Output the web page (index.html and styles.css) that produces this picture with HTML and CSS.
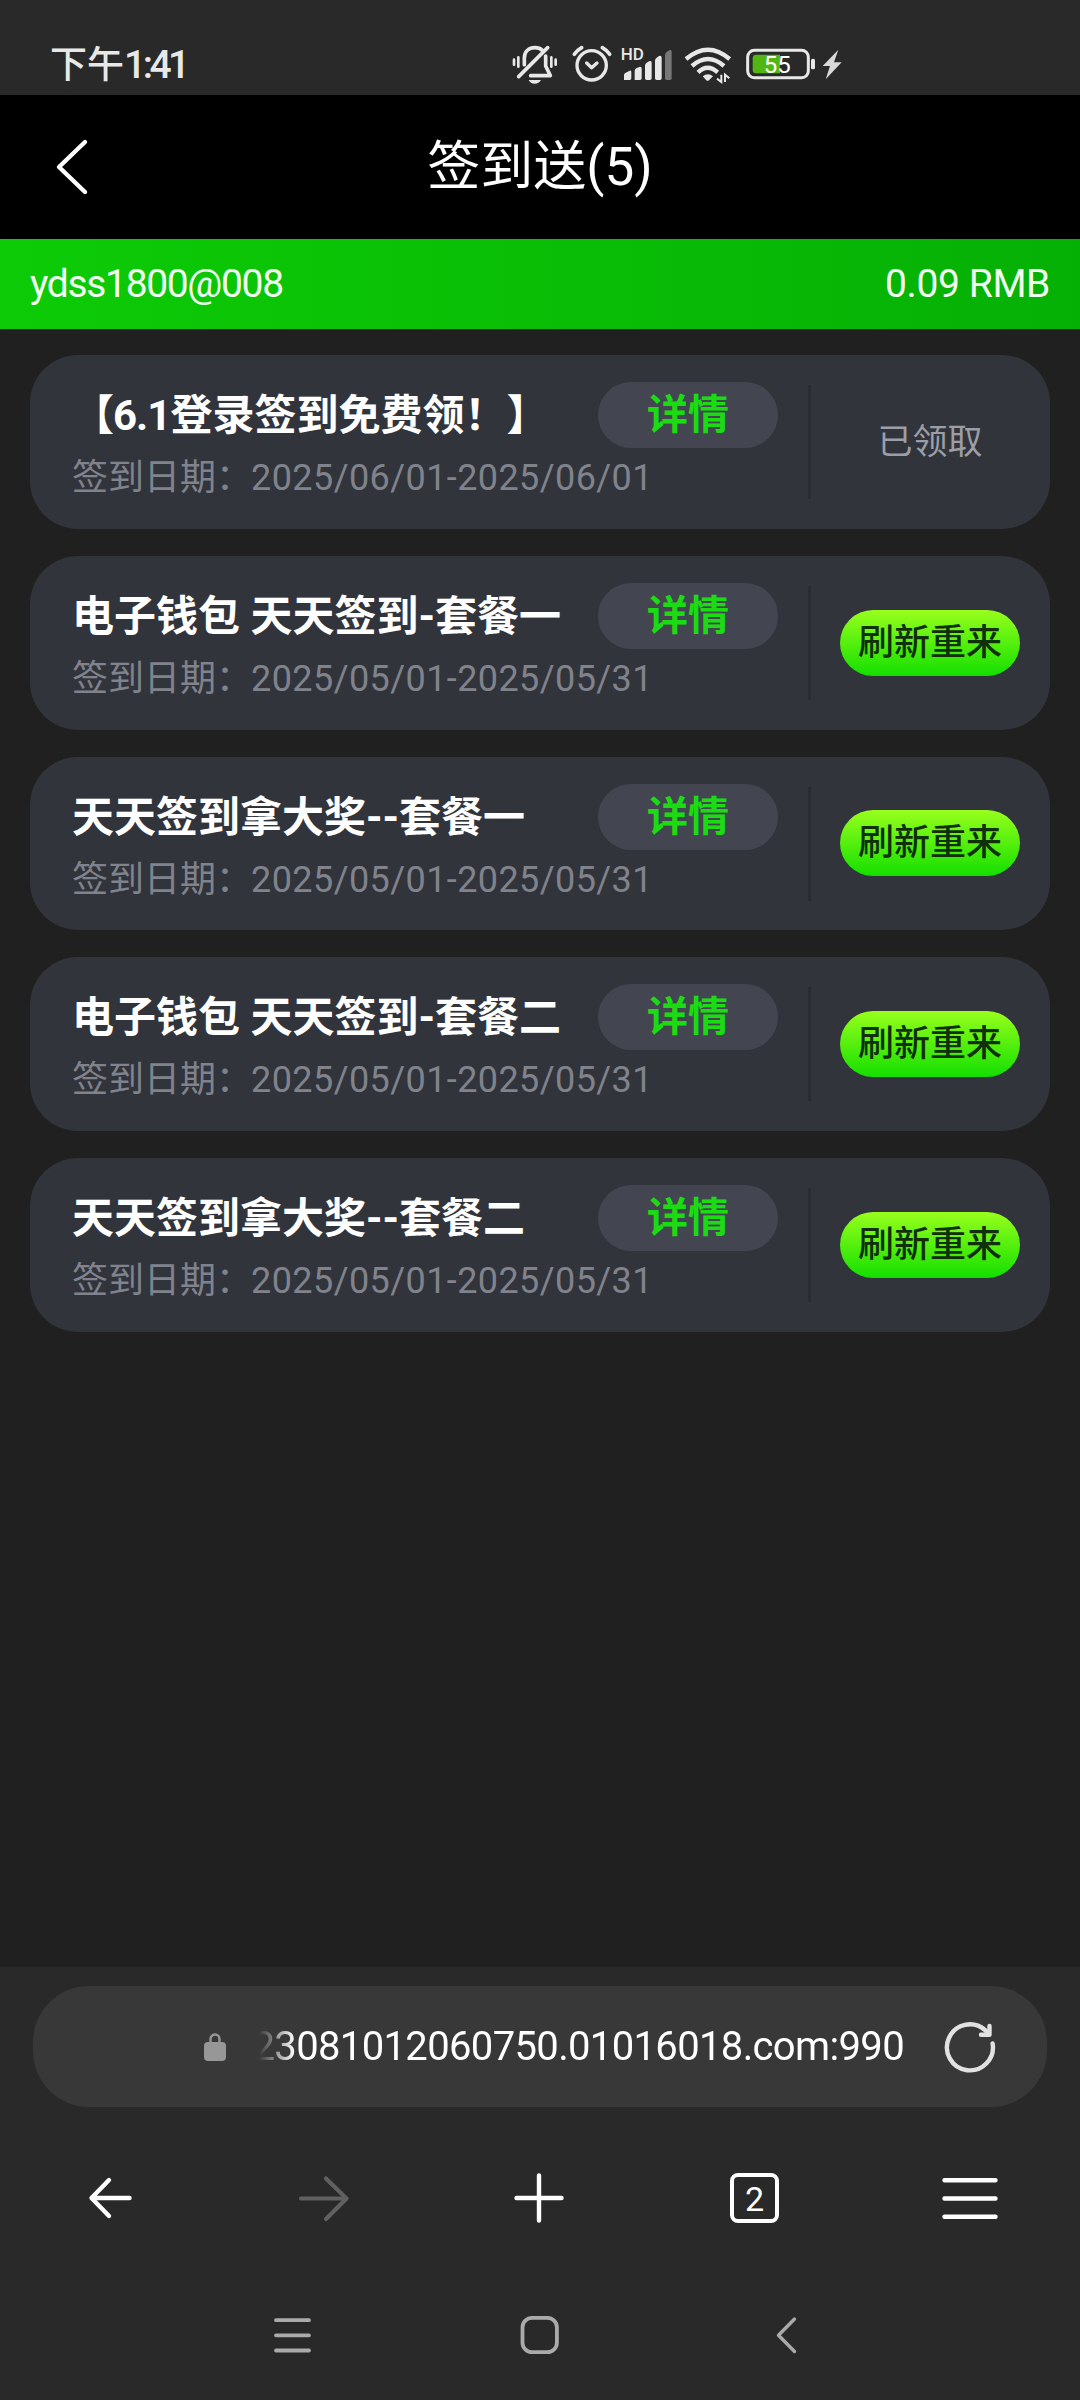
FILE: index.html
```html
<!DOCTYPE html>
<html lang="zh-CN">
<head>
<meta charset="utf-8">
<title>签到送(5)</title>
<link rel="stylesheet" href="styles.css">
</head>
<body>
<div class="screen">
  <div class="status">
    <div class="clock">下午<span class="clock-digits">1:41</span></div>
    <div class="status-icons">
      <svg width="46" height="40" viewBox="36 42 138 120" fill="none" stroke="#e8e8e8" stroke-width="11" stroke-linecap="round">
        <path d="M42 89v15M55 82v28M154 82v28M167 89v15" stroke-width="8"/>
        <path d="M73 104V84c0-20 14-31 32-31 9 0 17 3 22 8M137 78v30l14 29H92" stroke-linejoin="round"/>
        <path d="M56 140L143 53"/>
        <path d="M86 150h37q-6 11-19 11t-18-11z" fill="#e8e8e8" stroke="none"/>
      </svg>
      <svg class="icon-alarm" width="42" height="40" viewBox="212 42 126 120" fill="none" stroke="#e8e8e8" stroke-width="10" stroke-linecap="round">
        <circle cx="274" cy="106" r="44"/>
        <path d="M259 99l15 14 16-14" stroke-linejoin="round"/>
        <path d="M222 73q8-12 22-20M328 73q-8-12-22-20" stroke-width="11"/>
      </svg>
      <svg class="icon-signal" width="52" height="40" viewBox="364 42 156 120" fill="#e8e8e8">
        <text x="363" y="91" class="hd">HD</text>
        <path d="M373 150v-15q0-5 5-7l12-6q5-1 5 4v19q0 5-5 5zM405 150v-27q0-6 5-8l9-4q7-2 7 4v30q0 5-5 5zM436 145v-38q0-6 5-9l7-4q8-3 8 4v47q0 5-5 5h-10q-5 0-5-5zM466 145V92q0-6 5-9l7-5q8-3 8 5v62q0 5-5 5h-10q-5 0-5-5z"/>
        <path d="M496 145V76q0-6 5-10l7-5q8-4 8 5v79q0 5-5 5h-10q-5 0-5-5z" fill="#777"/>
      </svg>
      <svg class="icon-wifi" width="48" height="40" viewBox="552 42 144 120" fill="none" stroke="#e8e8e8" stroke-width="13">
        <path d="M558 87q66-56 131 0M576 108q48-42 96 0M594 127q29-27 59 0"/>
        <path d="M608 139q16-13 31 0l-12 12q-4 3-8 0z" fill="#e8e8e8" stroke="none"/>
        <path d="M664 134v22l-13-10M675 156v-22l13 11" stroke-width="6"/>
      </svg>
      <svg class="icon-battery" width="72" height="40" viewBox="734 42 216 120">
        <rect x="742" y="61" width="182" height="82" rx="20" fill="none" stroke="#e8e8e8" stroke-width="9"/>
        <path d="M767 74h72v56h-72q-10 0-10-10V84q0-10 10-10z" fill="#52b615"/>
        <rect x="932" y="86" width="12" height="32" rx="5" fill="#e8e8e8"/>
        <text x="831" y="128" class="battery-level">55</text>
      </svg>
      <svg class="icon-bolt" width="20" height="40" viewBox="965 42 60 120" fill="#d8d8d8">
        <path d="M1014 59l-47 49h22l-13 40 48-51h-23z"/>
      </svg>
    </div>
  </div>

  <header class="header">
    <svg class="header-back" width="38" height="62" viewBox="0 0 38 62" fill="none" stroke="#fff" stroke-width="4.4" stroke-linecap="round" stroke-linejoin="round"><path d="M32 6L6 31l26 25"/></svg>
    <h1 class="header-title">签到送(5)</h1>
  </header>

  <div class="account">
    <span class="account-name">ydss1800@008</span>
    <span class="balance">0.09 RMB</span>
  </div>

  <main class="list">
    <section class="card">
      <div class="info">
        <div class="row"><h2 class="name">【<span class="tight">6.1</span>登录签到免费领！】</h2><button class="detail">详情</button></div>
        <p class="date">签到日期：<span class="range">2025/06/01-2025/06/01</span></p>
      </div>
      <div class="action"><span class="claimed">已领取</span></div>
    </section>
    <section class="card">
      <div class="info">
        <div class="row"><h2 class="name">电子钱包 天天签到-套餐一</h2><button class="detail">详情</button></div>
        <p class="date">签到日期：<span class="range">2025/05/01-2025/05/31</span></p>
      </div>
      <div class="action"><button class="retry">刷新重来</button></div>
    </section>
    <section class="card">
      <div class="info">
        <div class="row"><h2 class="name">天天签到拿大奖--套餐一</h2><button class="detail">详情</button></div>
        <p class="date">签到日期：<span class="range">2025/05/01-2025/05/31</span></p>
      </div>
      <div class="action"><button class="retry">刷新重来</button></div>
    </section>
    <section class="card">
      <div class="info">
        <div class="row"><h2 class="name">电子钱包 天天签到-套餐二</h2><button class="detail">详情</button></div>
        <p class="date">签到日期：<span class="range">2025/05/01-2025/05/31</span></p>
      </div>
      <div class="action"><button class="retry">刷新重来</button></div>
    </section>
    <section class="card">
      <div class="info">
        <div class="row"><h2 class="name">天天签到拿大奖--套餐二</h2><button class="detail">详情</button></div>
        <p class="date">签到日期：<span class="range">2025/05/01-2025/05/31</span></p>
      </div>
      <div class="action"><button class="retry">刷新重来</button></div>
    </section>
  </main>

  <footer class="browser">
    <div class="address">
      <svg width="24" height="30" viewBox="0 0 24 30"><rect x="1" y="10" width="22" height="19" rx="4" fill="#979797"/><path d="M7.5 11V7a4.5 4.5 0 0 1 9 0v4" fill="none" stroke="#979797" stroke-width="2.4"/></svg>
      <div class="url"><span>23081012060750.01016018.com:990</span></div>
      <svg class="reload" width="54" height="54" viewBox="0 0 54 54" fill="none" stroke="#e2e2e2" stroke-width="4.4" stroke-linecap="round" stroke-linejoin="round"><path d="M49.6 23.500A23 23 0 1 1 42 10l3.500 3.500"/><path d="M46.500 6v8.800H38"/></svg>
    </div>
    <div class="toolbar">
      <svg width="60" height="60" viewBox="0 0 60 60" fill="none" stroke="#fff" stroke-width="4.400" stroke-linecap="round" stroke-linejoin="round"><path d="M49.500 30H12M29 12L11.500 30 29 48"/></svg>
      <svg width="60" height="60" viewBox="0 0 60 60" fill="none" stroke="#606060" stroke-width="4.200" stroke-linecap="round" stroke-linejoin="round"><path d="M6 30.500H51M31 10.500L51.500 30.500 31 51"/></svg>
      <svg width="60" height="60" viewBox="0 0 60 60" fill="none" stroke="#fff" stroke-width="4.400" stroke-linecap="round"><path d="M6.500 30h45M29 7.500v45"/></svg>
      <div class="tabs"><span>2</span></div>
      <svg width="60" height="60" viewBox="0 0 60 60" fill="none" stroke="#fff" stroke-width="4.400" stroke-linecap="round"><path d="M4.500 12.300h51M4.500 30.500h51M4.500 48.700h51"/></svg>
    </div>
    <div class="sysnav">
      <svg width="44" height="44" viewBox="0 0 44 44" fill="none" stroke="#aaa" stroke-width="3.800" stroke-linecap="round"><path d="M6 7.200h33M6 22.300h33M6 37.500h33"/></svg>
      <svg width="44" height="44" viewBox="0 0 44 44" fill="none" stroke="#aaa" stroke-width="3.800"><rect x="4.500" y="4.800" width="34.400" height="34.400" rx="9.500"/></svg>
      <svg width="44" height="44" viewBox="0 0 44 44" fill="none" stroke="#aaa" stroke-width="3.400" stroke-linecap="round" stroke-linejoin="round"><path d="M28.500 6L12.500 22.300 28.500 38.500"/></svg>
    </div>
  </footer>
</div>
</body>
</html>
```

FILE: styles.css
```css
* { box-sizing: border-box; margin: 0; padding: 0; }

body {
  background: #202020;
  color: #fff;
  font-family: Roboto, "Noto Sans CJK SC", sans-serif;
}

svg { display: block; flex: none; }

button { border: 0; font: inherit; }

.screen {
  display: flex;
  flex-direction: column;
  width: 1080px;
  height: 2400px;
  overflow: hidden;
}

/* System status bar */
.status {
  display: flex;
  flex: none;
  height: 95px;
  padding-left: 50px;
  background: #292929;
}

.clock {
  width: 462px;
  padding-top: 47px;
  color: #e8e8e8;
  font-size: 37px;
  font-weight: 500;
  line-height: 37px;
}

.clock-digits { font-size: 39px; letter-spacing: -3.5px; line-height: 37px; }

.status-icons { display: flex; padding-top: 44px; }
.icon-alarm { margin-left: 13px; }
.icon-signal { margin-left: 8px; }
.icon-wifi { margin-left: 11px; }
.icon-battery { margin-left: 13px; }
.icon-bolt { margin-left: 5px; }
.hd { font-size: 51px; font-weight: 500; }
.battery-level {
  fill: #fff;
  font-size: 72px;
  font-weight: 400;
  text-anchor: middle;
}

/* Page header */
.header {
  display: grid;
  grid-template-columns: 136px 1fr 136px;
  align-items: center;
  flex: none;
  height: 144px;
  background: #000;
}

.header-back { margin-left: 53px; }

.header-title {
  font-size: 53px;
  font-weight: 400;
  line-height: 72px;
  text-align: center;
}

.account {
  display: flex;
  align-items: center;
  justify-content: space-between;
  flex: none;
  height: 90px;
  padding: 0 30px;
  background: linear-gradient(90deg, #0dcb06, #05b005);
  color: #f0fff0;
  font-size: 39px;
  line-height: 48px;
}

.account-name { letter-spacing: -1.35px; }
.balance { letter-spacing: -.4px; }

/* Check-in cards */
.list {
  display: flex;
  flex: 1;
  flex-direction: column;
  gap: 27px;
  padding: 26px 30px 0;
}

.card {
  display: flex;
  flex: none;
  height: 173.8px;
  border-radius: 48px;
  background: #32343c;
}

.info { width: 778px; padding: 27px 30px 0 42px; }

.row { display: flex; align-items: center; justify-content: space-between; }

.name {
  padding-top: 2px;
  font-size: 42px;
  font-weight: 700;
  line-height: 42px;
  white-space: nowrap;
}

.tight { margin-left: -1px; letter-spacing: -1px; }

.detail {
  width: 180px;
  height: 66px;
  border-radius: 33px;
  background: #434650;
  color: #1bdc12;
  font-size: 41px;
  font-weight: 700;
  line-height: 66px;
}

.date {
  margin-top: 12px;
  color: #80838b;
  font-size: 36px;
  line-height: 36px;
  white-space: nowrap;
}

.range { margin-left: -1px; letter-spacing: .42px; }

.action {
  display: flex;
  flex: 1;
  align-items: center;
  justify-content: center;
  position: relative;
  padding-left: 2px;
}

.action::before {
  content: "";
  position: absolute;
  top: 30px;
  left: 0;
  width: 3px;
  height: 114px;
  background: #292c33;
}

.claimed {
  padding-top: 2px;
  color: #9c9ea6;
  font-size: 35px;
  line-height: 44px;
}

.retry {
  width: 180px;
  height: 66px;
  border-radius: 33px;
  background: linear-gradient(#98ff1c, #13df00);
  color: #10300a;
  font-size: 36px;
  font-weight: 500;
  line-height: 64px;
}

/* Browser controls */
.browser {
  flex: none;
  height: 433px;
  padding-top: 19px;
  background: #292929;
}

.address {
  display: flex;
  align-items: center;
  height: 121px;
  margin: 0 33px;
  padding-left: 170px;
  border-radius: 56px;
  background: #383838;
}

.url {
  display: flex;
  justify-content: flex-end;
  width: 645px;
  margin-left: 32px;
  overflow: hidden;
  font-size: 40px;
  letter-spacing: -.65px;
  line-height: 48px;
  mask-image: linear-gradient(90deg, transparent, #000 36px);
}

.reload { margin-left: 39px; }

.toolbar {
  display: flex;
  align-items: center;
  justify-content: space-between;
  height: 60px;
  margin-top: 61px;
  padding: 0 80px;
}

.tabs {
  display: flex;
  align-items: center;
  justify-content: center;
  width: 49px;
  height: 50px;
  margin: 0 6px 0 5px;
  border: 4px solid #fff;
  border-radius: 8px;
  font-size: 34px;
  line-height: 40px;
}

.tabs span { padding-top: 2px; }

.sysnav {
  display: flex;
  justify-content: space-between;
  margin-top: 85px;
  padding: 0 270px;
}
```
